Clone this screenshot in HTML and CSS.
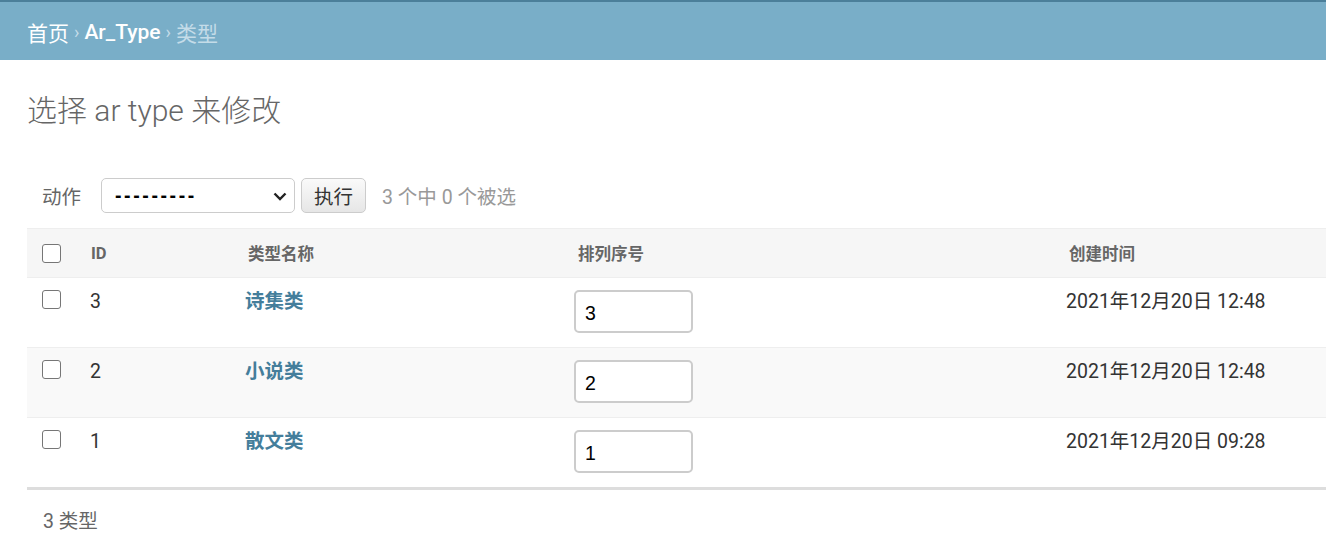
FILE: index.html
```html
<!DOCTYPE html>
<html lang="zh-hans">
<head>
<meta charset="utf-8">
<title>选择 ar type 来修改</title>
<link rel="stylesheet" href="styles.css">
</head>
<body>
<div class="breadcrumbs">
  <a href="#">首页</a><span class="sep">›</span><a href="#">Ar_Type</a><span class="sep">›</span><span class="current">类型</span>
</div>
<div class="content">
  <h1 class="title">选择 ar type 来修改</h1>
  <div class="actions">
    <label class="action-label">动作</label>
    <div class="select-wrap">
      <select class="action-select"><option>---------</option></select>
      <svg class="chevron" width="14" height="9" viewBox="0 0 14 9"><path d="M1.5 1.5 L7 7 L12.5 1.5" fill="none" stroke="#222" stroke-width="2.4"/></svg>
    </div>
    <button class="btn">执行</button>
    <span class="counter">3 个中 0 个被选</span>
  </div>
  <table class="result-list">
    <thead>
      <tr>
        <th class="col-check"><span class="cb"></span></th>
        <th class="col-id">ID</th>
        <th class="col-name">类型名称</th>
        <th class="col-order">排列序号</th>
        <th class="col-time">创建时间</th>
      </tr>
    </thead>
    <tbody>
      <tr>
        <td class="col-check"><span class="cb"></span></td>
        <td class="col-id">3</td>
        <td class="col-name"><a href="#">诗集类</a></td>
        <td class="col-order"><input class="num" type="text" value="3"></td>
        <td class="col-time">2021年12月20日 12:48</td>
      </tr>
      <tr class="alt">
        <td class="col-check"><span class="cb"></span></td>
        <td class="col-id">2</td>
        <td class="col-name"><a href="#">小说类</a></td>
        <td class="col-order"><input class="num" type="text" value="2"></td>
        <td class="col-time">2021年12月20日 12:48</td>
      </tr>
      <tr>
        <td class="col-check"><span class="cb"></span></td>
        <td class="col-id">1</td>
        <td class="col-name"><a href="#">散文类</a></td>
        <td class="col-order"><input class="num" type="text" value="1"></td>
        <td class="col-time">2021年12月20日 09:28</td>
      </tr>
    </tbody>
  </table>
  <p class="paginator">3 类型</p>
</div>
</body>
</html>
```

FILE: styles.css
```css
* { box-sizing: border-box; }
html, body { margin: 0; padding: 0; overflow: hidden; }
body {
  font-family: Roboto, "Noto Sans CJK SC", sans-serif;
  color: #333;
  background: #fff;
}

.breadcrumbs {
  height: 60px;
  border-top: 2px solid #4b7f9a;
  background: #79aec8;
  padding: 1px 27px 0;
  display: flex;
  align-items: center;
  font-size: 21px;
  color: #c4dce8;
}
.breadcrumbs a { color: #fff; text-decoration: none; }
.breadcrumbs a + .sep + a { font-weight: 500; }
.breadcrumbs .sep { margin: 0 5px; font-size: 18px; }
.breadcrumbs .current { color: #c4dce8; }

.content { padding-left: 27px; }

.title {
  margin: 0;
  padding-top: 32px;
  height: 109px;
  font-size: 30px;
  font-weight: 300;
  color: #666;
  line-height: 38px;
}

.actions {
  display: flex;
  align-items: center;
  height: 59px;
  padding: 0 0 7px 15px;
  color: #666;
  font-size: 19.5px;
}
.action-label { margin-right: 20px; }
.select-wrap { position: relative; }
.action-select {
  -webkit-appearance: none;
  appearance: none;
  width: 194px;
  height: 35px;
  border: 1px solid #ccc;
  border-radius: 5px;
  background: #fff;
  font-family: "Liberation Sans", sans-serif;
  font-size: 19.5px;
  font-weight: 700;
  letter-spacing: 2.6px;
  color: #000;
  padding: 0 0 0 13px;
  margin: 0;
}
.chevron { position: absolute; right: 8px; top: 14px; }
.btn {
  margin-left: 6px;
  height: 35px;
  width: 65px;
  border: 1px solid #ccc;
  border-radius: 5px;
  background: linear-gradient(#fafafa, #e6e6e6);
  font-family: Roboto, "Noto Sans CJK SC", sans-serif;
  font-size: 19.5px;
  color: #333;
  padding: 0;
}
.counter { margin-left: 16px; color: #999; }

.result-list {
  width: 100%;
  border-collapse: collapse;
  margin-top: 0;
}
.result-list th {
  background: #f6f6f6;
  border-top: 1px solid #eee;
  border-bottom: 1px solid #eee;
  height: 49px;
  text-align: left;
  font-size: 16.5px;
  font-weight: 700;
  color: #666;
  padding: 0 0 0 14px;
  vertical-align: middle;
}
.result-list td {
  padding: 12px 11px 13px;
  border-bottom: 1px solid #eee;
  font-size: 19.5px;
  line-height: 24px;
  vertical-align: top;
  color: #333;
  height: 70px;
}
.result-list tbody tr:last-child td { border-bottom: 3px solid #ddd; height: 71px; }
.result-list tr.alt td { background: #f9f9f9; }

.result-list .col-check { width: 53px; padding-left: 15px; padding-right: 0; }
.result-list th.col-check { padding-left: 15px; }
.result-list .col-id { width: 154px; }
.result-list .col-name { width: 329px; }
.result-list .col-order { width: 492px; }
.result-list td.col-id { padding-left: 10px; }
.result-list th.col-id { padding-left: 11px; }
.result-list th.col-order { padding-left: 15px; }

.cb {
  display: block;
  width: 19px;
  height: 19px;
  border: 1px solid #767676;
  border-radius: 3px;
  background: #fff;
}

.result-list td a {
  color: #447e9b;
  font-weight: 700;
  text-decoration: none;
}
.num {
  display: block;
  width: 119px;
  height: 43px;
  margin: 0;
  border: 2px solid #ccc;
  border-radius: 5px;
  padding: 4px 0 0 9px;
  font-family: "Liberation Sans", sans-serif;
  font-size: 19.5px;
  color: #000;
  background: #fff;
}

.paginator {
  margin: 0;
  padding: 15px 0 0 16px;
  font-size: 19.5px;
  color: #666;
}
```
